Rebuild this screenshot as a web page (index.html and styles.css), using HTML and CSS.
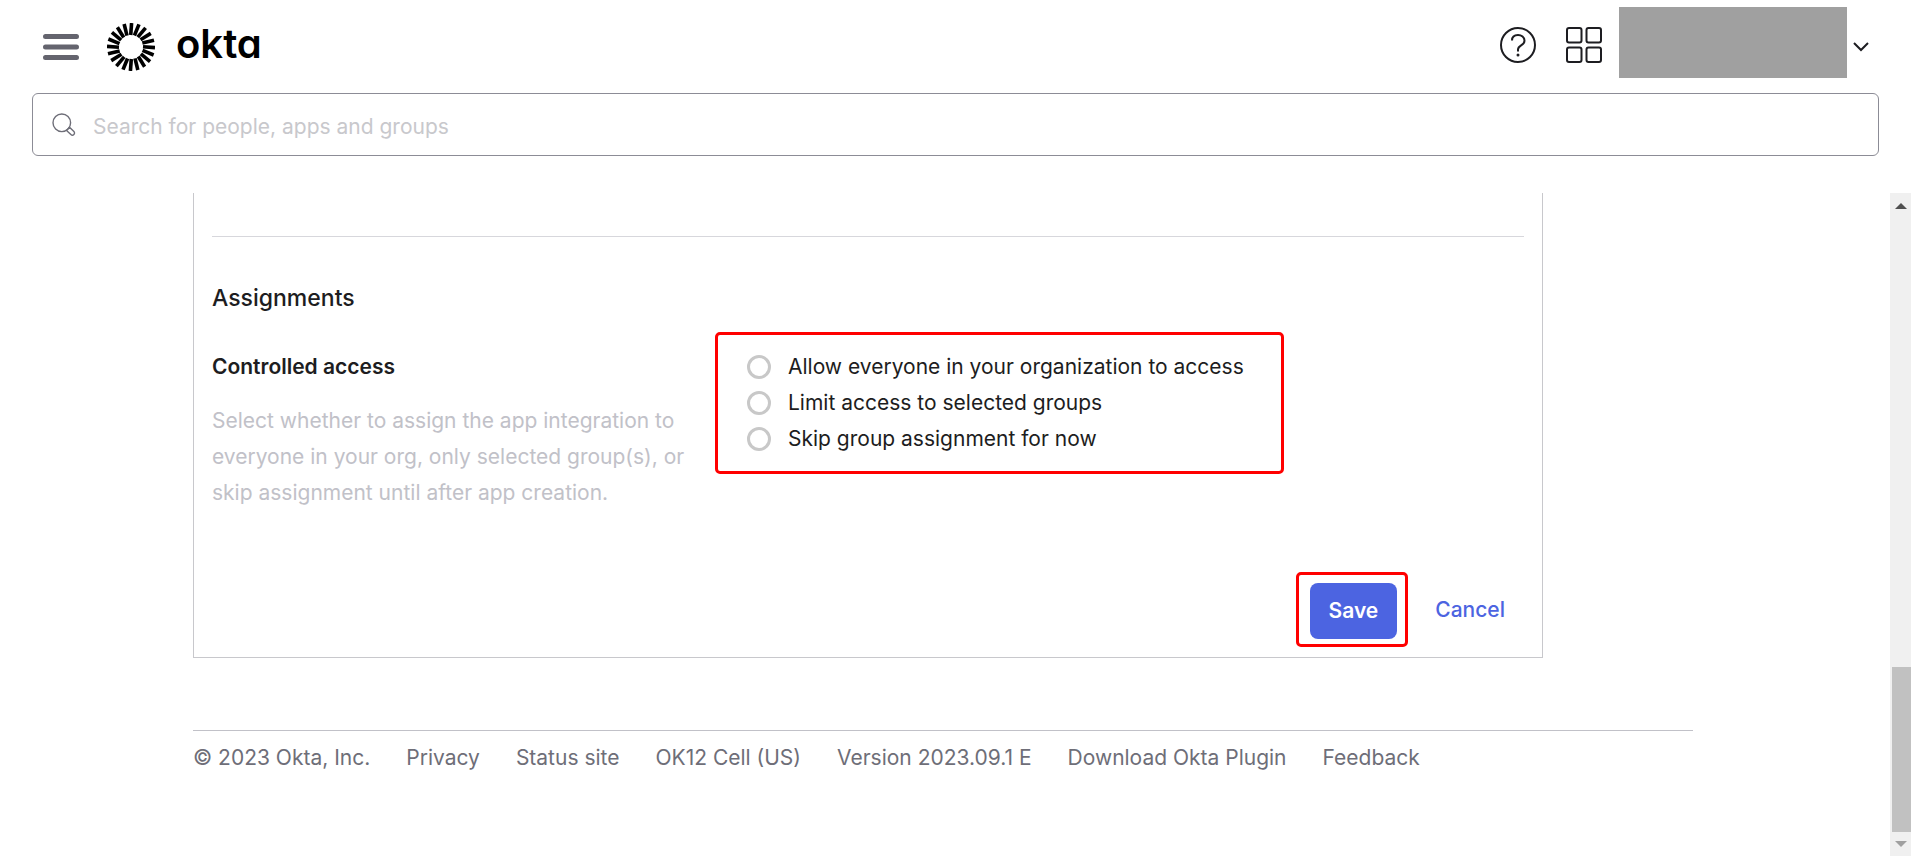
FILE: index.html
```
<!DOCTYPE html>
<html lang="en">

<head>
    <meta charset="UTF-8">
    <meta name="viewport" content="width=device-width, initial-scale=1.0">
    <title>Okta Admin - Create App Integration</title>
    <link rel="stylesheet" href="styles.css">
</head>

<body>

    <!-- Header -->
    <header class="header">
        <div class="topbar">
            <button class="icon-button menu-button" type="button" aria-label="Menu">
                <svg width="36" height="26" viewBox="0 0 36 26" fill="none" stroke="#64646e" stroke-width="5" stroke-linecap="round">
                    <path d="M2.5 2.5h31M2.5 13h31M2.5 23.500h31" />
                </svg>
            </button>
            <a class="logo" href="#">
                <svg width="48" height="48" viewBox="0 0 48 48" stroke="#000" stroke-width="3.600" aria-hidden="true">
                    <g id="rays">
                        <path id="ray" d="M24.600 0L23.700 12" />
                        <use href="#ray" transform="rotate(18 24 24)" />
                        <use href="#ray" transform="rotate(36 24 24)" />
                        <use href="#ray" transform="rotate(54 24 24)" />
                        <use href="#ray" transform="rotate(72 24 24)" />
                    </g>
                    <use href="#rays" transform="rotate(90 24 24)" />
                    <use href="#rays" transform="rotate(180 24 24)" />
                    <use href="#rays" transform="rotate(270 24 24)" />
                </svg>
                <span class="logo-text">okta</span>
            </a>
            <div class="tools">
                <button class="icon-button" type="button" aria-label="Help">
                    <svg width="36" height="36" viewBox="0 0 36 36" fill="none" stroke="#1d1d21" stroke-width="2">
                        <circle cx="18" cy="18" r="17" />
                        <path d="M12 13.500C12 10 14.500 8 18 8s6.500 2.300 6.500 5.700c0 5-6.500 4.300-6.500 8.800v2" />
                        <circle cx="18" cy="28" r="1.500" fill="#1d1d21" stroke="none" />
                    </svg>
                </button>
                <button class="icon-button" type="button" aria-label="Apps">
                    <svg width="36" height="36" viewBox="0 0 36 36" fill="none" stroke="#1d1d21" stroke-width="2">
                        <rect x="1" y="1" width="14.500" height="14.500" rx="2" />
                        <rect x="20.500" y="1" width="14.500" height="14.500" rx="2" />
                        <rect x="1" y="20.500" width="14.500" height="14.500" rx="2" />
                        <rect x="20.500" y="20.500" width="14.500" height="14.500" rx="2" />
                    </svg>
                </button>
                <button class="icon-button account" type="button" aria-label="Account">
                    <span class="account-name"></span>
                    <svg width="16" height="10" viewBox="0 0 16 10" fill="none" stroke="#1d1d21" stroke-width="2">
                        <path d="M1 1l7 7 7-7" />
                    </svg>
                </button>
            </div>
        </div>
        <form class="search">
            <svg width="24" height="24" viewBox="0 0 24 24" fill="none" stroke="#6e6e78" stroke-width="1.400">
                <circle cx="9.800" cy="9.800" r="8.800" />
                <path d="M14.500 17.500l3-3.200 4.400 4.300a2.100 2.100 0 0 1-3 3z" />
            </svg>
            <input type="text" aria-label="Search" placeholder="Search for people, apps and groups">
        </form>
    </header>

    <!-- Scrolling area -->
    <div class="page">
        <main class="content">
            <form class="panel">
                <section class="section">
                    <h2>Assignments</h2>
                    <div class="row">
                        <div class="info">
                            <h3 id="access">Controlled access</h3>
                            <p>Select whether to assign the app integration to everyone in your org, only selected group(s), or skip assignment until after app creation.</p>
                        </div>
                        <div class="options" role="radiogroup" aria-labelledby="access">
                            <label><input type="radio" name="access">Allow everyone in your organization to access</label>
                            <label><input type="radio" name="access">Limit access to selected groups</label>
                            <label><input type="radio" name="access">Skip group assignment for now</label>
                        </div>
                    </div>
                </section>
                <div class="actions">
                    <div class="highlight">
                        <button class="save" type="button">Save</button>
                    </div>
                    <button class="cancel" type="button">Cancel</button>
                </div>
            </form>

            <footer class="footer">
                <span>© 2023 Okta, Inc.</span>
                <a href="#">Privacy</a>
                <a href="#">Status site</a>
                <a href="#">OK12 Cell (US)</a>
                <span>Version 2023.09.1 E</span>
                <a href="#">Download Okta Plugin</a>
                <a href="#">Feedback</a>
            </footer>
        </main>

        <div class="scrollbar" aria-hidden="true">
            <span class="arrow-up"></span>
            <span class="thumb"></span>
            <span class="arrow-down"></span>
        </div>
    </div>

</body>

</html>
```
FILE: styles.css
```
* {
    margin: 0;
    padding: 0;
    box-sizing: border-box;
}

body {
    display: flex;
    flex-direction: column;
    height: 100vh;
    overflow: hidden;
    font-family: Inter, sans-serif;
    font-size: 21px;
    line-height: 36px;
    color: #1d1d21;
    background-color: #fff;
}

button,
input {
    font: inherit;
    color: inherit;
}

button {
    border: none;
    background: none;
    cursor: pointer;
}

a {
    color: inherit;
    text-decoration: none;
}

svg {
    display: block;
    flex-shrink: 0;
}

/* Header */
.header {
    padding: 7px 32px 37px;
}

.topbar {
    display: flex;
    align-items: flex-start;
    padding: 0 10px 0 11px;
    margin-bottom: 15px;
}

.menu-button {
    margin-top: 27px;
}

.logo {
    display: flex;
    gap: 21px;
    margin: 16px 0 0 28px;
    color: #000;
}

.logo-text {
    font-size: 40px;
    font-weight: 600;
    line-height: 42px;
    font-feature-settings: "cv11";
}

.tools {
    display: flex;
    align-items: flex-start;
    margin-left: auto;
}

.tools .icon-button {
    margin: 20px 0 0 30px;
}

.tools .account {
    display: flex;
    align-items: center;
    gap: 6px;
    margin: 0 0 0 17px;
}

.account-name {
    width: 228px;
    height: 71px;
    background-color: #a0a0a0;
}

.account svg {
    margin-top: 8px;
}

.search {
    display: flex;
    align-items: center;
    gap: 17px;
    height: 63px;
    padding: 0 19px;
    border: 1px solid #8c8c96;
    border-radius: 6px;
}

.search input {
    flex: 1;
    height: 100%;
    padding-top: 4px;
    border: none;
    outline: none;
}

.search input::placeholder {
    color: #c8c8cc;
    opacity: 1;
}

/* Scrolling area */
.page {
    display: flex;
    flex: 1;
    min-height: 0;
}

.content {
    flex: 1;
    padding: 0 197px 0 193px;
}

.panel {
    width: 90%;
    padding: 43px 18px 10px;
    border: 1px solid #c8c8cc;
    border-top: none;
}

.section {
    border-top: 1px solid #d7d7dc;
}

h2 {
    margin: 43px 0 16px;
    font-size: 23px;
    font-weight: 500;
    line-height: 36px;
}

h3 {
    margin-bottom: 18px;
    font-size: 21px;
    font-weight: 600;
}

.row {
    display: flex;
    align-items: flex-start;
    gap: 24px;
}

.info {
    width: 479px;
    padding-top: 17px;
}

.info p {
    color: #c1c1c8;
}

.options {
    padding: 14px 37px 14px 29px;
    border: 3px solid #f00;
    border-radius: 5px;
}

.options label {
    display: flex;
    align-items: center;
    gap: 17px;
}

.options input {
    appearance: none;
    width: 24px;
    height: 24px;
    border: 3px solid #c8c8c8;
    border-radius: 50%;
}

.actions {
    display: flex;
    justify-content: flex-end;
    align-items: center;
    gap: 27px;
    margin-top: 61px;
    padding-right: 19px;
}

.highlight {
    padding: 8px 8px 5px 11px;
    border: 3px solid #f00;
    border-radius: 5px;
}

.save {
    display: block;
    padding: 10px 19px;
    border-radius: 8px;
    font-weight: 600;
    color: #fff;
    background-color: #4c64e1;
}

.cancel {
    font-weight: 500;
    color: #4c64e1;
}

/* Footer */
.footer {
    display: flex;
    gap: 36px;
    margin-top: 72px;
    padding-top: 9px;
    border-top: 1px solid #c1c1c8;
    white-space: nowrap;
    color: #6e6e78;
}

/* Scrollbar */
.scrollbar {
    display: flex;
    flex-direction: column;
    align-items: center;
    width: 21px;
    padding: 10px 0 9px;
    background-color: #f0f0f0;
}

.arrow-up,
.arrow-down {
    border: 6px solid transparent;
}

.arrow-up {
    border-top: none;
    border-bottom-color: #505050;
}

.arrow-down {
    margin-top: 9px;
    border-bottom: none;
    border-top-color: #a0a0a0;
}

.thumb {
    width: 19px;
    height: 165px;
    margin: auto 0 0 2px;
    background-color: #c1c1c1;
}
```
